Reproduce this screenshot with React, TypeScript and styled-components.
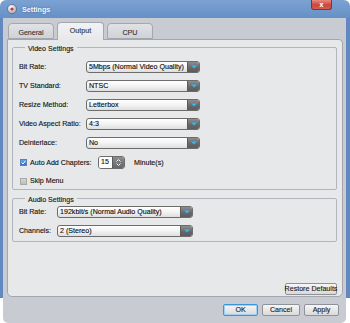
import styled, { createGlobalStyle } from 'styled-components';

const GlobalStyle = createGlobalStyle`
  html, body {
    margin: 0;
    padding: 0;
    background: #ffffff;
  }
  body {
    font-family: 'Liberation Sans', Arial, sans-serif;
    font-size: 7.1px;
    color: #111111;
    -webkit-text-stroke: 0.12px currentColor;
  }
  * {
    box-sizing: border-box;
  }
`;

const Window = styled.div`
  width: 350px;
  height: 323px;
  display: flex;
  flex-direction: column;
  background: linear-gradient(to bottom, #7ca2d3 0, #6690c6 18px, #6189bf 18px, #6189bf 298px, transparent 298px);
  border-radius: 6px 6px 0 0;
  overflow: hidden;
`;

const TitleBar = styled.div`
  height: 18px;
  display: flex;
  align-items: center;
  gap: 5px;
  padding: 0 18px 0 7px;
`;

const TitleText = styled.span`
  font-size: 7.2px;
  font-weight: bold;
  color: #f5f8fc;
  -webkit-text-stroke: 0;
  text-shadow: 0 0 2px rgba(40, 70, 120, 0.6);
`;

const CloseButton = styled.div`
  margin-left: auto;
  align-self: flex-start;
  width: 21px;
  height: 10px;
  border: 1px solid #8f2f2a;
  border-top: none;
  border-radius: 0 0 3px 3px;
  background: linear-gradient(to bottom, #e98a80, #c9463b 55%, #d65d50);
  color: #ffffff;
  font-size: 7px;
  font-weight: bold;
  line-height: 9px;
  text-align: center;
`;

const Body = styled.div`
  flex: 1;
  margin: 0 4px 0 3px;
  padding: 4px 3px 0 4px;
  background: #c8ccd2;
  border-radius: 0 0 5px 5px;
  display: flex;
  flex-direction: column;
`;

const TabRow = styled.div`
  height: 17px;
  display: flex;
  align-items: flex-end;
  gap: 3px;
  padding-left: 1px;
`;

const Tab = styled.div<{ $active?: boolean; $width: number }>`
  width: ${({ $width }) => $width}px;
  height: ${({ $active }) => ($active ? 18 : 16)}px;
  margin-bottom: ${({ $active }) => ($active ? -1 : 0)}px;
  position: relative;
  z-index: ${({ $active }) => ($active ? 1 : 0)};
  border: 1px solid #a4a8ae;
  border-bottom: ${({ $active }) => ($active ? 'none' : '1px solid #a4a8ae')};
  border-radius: 4px 4px 0 0;
  background: ${({ $active }) =>
    $active ? 'linear-gradient(to bottom, #f1f2f3, #e7e8ea)' : 'linear-gradient(to bottom, #e0e2e5, #cfd2d6)'};
  display: flex;
  justify-content: center;
  padding-top: ${({ $active }) => ($active ? 4 : 5)}px;
  color: #333333;
`;

const Panel = styled.div`
  flex: 1;
  background: #e7e8ea;
  border: 1px solid #a3a7ad;
  border-radius: 0 4px 5px 5px;
  padding: 1px 5px 1px 4px;
  display: flex;
  flex-direction: column;
`;

const Group = styled.fieldset<{ $top?: number; $padTop: number; $padBottom: number }>`
  margin: ${({ $top }) => $top || 0}px 0 0 0;
  padding: ${({ $padTop }) => $padTop}px 6px ${({ $padBottom }) => $padBottom}px 6px;
  border: 1px solid #b2b6bc;
  border-radius: 2px;
  min-width: 0;
  display: flex;
  flex-direction: column;
  gap: 7px;
`;

const Legend = styled.legend`
  padding: 4px 3px 0 3px;
  margin-left: 6px;
  line-height: 8px;
`;

const Row = styled.div<{ $labelWidth: number; $height?: number }>`
  height: ${({ $height }) => $height || 12}px;
  display: grid;
  grid-template-columns: ${({ $labelWidth }) => $labelWidth}px auto;
  align-items: center;
`;

const Label = styled.span`
  white-space: nowrap;
`;

const SelectBox = styled.div<{ $width: number }>`
  width: ${({ $width }) => $width}px;
  height: 12px;
  display: flex;
  border: 1px solid #6c6c6c;
  border-radius: 3px;
  overflow: hidden;
  background: linear-gradient(to bottom, #ffffff, #f3f3f3 50%, #dedede);
`;

const SelectValue = styled.span`
  flex: 1;
  padding-left: 2px;
  line-height: 10px;
  white-space: nowrap;
  overflow: hidden;
  color: #0a0a0a;
`;

const SelectArrow = styled.div`
  width: 12px;
  display: flex;
  align-items: center;
  justify-content: center;
  border-left: 1px solid #5a5a5a;
  background: linear-gradient(to bottom, #8d8d8d, #666666 60%, #5c5c5c);
`;

const CheckRow = styled.div<{ $height?: number }>`
  height: ${({ $height }) => $height || 10}px;
  display: flex;
  align-items: center;
  padding-left: 1px;
`;

const CheckBox = styled.div<{ $checked?: boolean }>`
  width: 7px;
  height: 7px;
  margin-right: 3px;
  border: 1px solid ${({ $checked }) => ($checked ? '#5b82b8' : '#a8a8a8')};
  background: ${({ $checked }) => ($checked ? 'linear-gradient(#6ea3e6, #2f6fc4)' : 'linear-gradient(#d6d6d6, #bdbdbd)')};
  display: flex;
  align-items: center;
  justify-content: center;
`;

const CheckLabel = styled.span<{ $width?: number }>`
  width: ${({ $width }) => ($width ? `${$width}px` : 'auto')};
  white-space: nowrap;
`;

const Spinner = styled.div`
  width: 27px;
  height: 13px;
  display: flex;
  border: 1px solid #6c6c6c;
  border-radius: 3px;
  overflow: hidden;
  margin-right: 9px;
`;

const SpinnerInput = styled.span`
  flex: 1;
  background: #ffffff;
  padding-left: 2px;
  line-height: 11px;
`;

const SpinnerButtons = styled.div`
  width: 12px;
  display: flex;
  flex-direction: column;
  align-items: center;
  justify-content: center;
  gap: 1px;
  border-left: 1px solid #5a5a5a;
  background: linear-gradient(to bottom, #8d8d8d, #666666);
`;

const Button = styled.div<{ $width: number; $primary?: boolean }>`
  width: ${({ $width }) => $width}px;
  height: 12px;
  border: 1px solid ${({ $primary }) => ($primary ? '#3d95d6' : '#8f9399')};
  border-radius: 2px;
  background: linear-gradient(to bottom, #f6f6f6, #e8e8e8 50%, #d9d9d9);
  box-shadow: ${({ $primary }) => ($primary ? 'inset 0 0 0 1px #9fd0f3' : 'none')};
  display: flex;
  align-items: center;
  justify-content: center;
  color: #1a1a1a;
  white-space: nowrap;
`;

const RestoreRow = styled.div`
  margin-top: auto;
  display: flex;
  justify-content: flex-end;
`;

const Footer = styled.div`
  height: 26px;
  display: flex;
  justify-content: flex-end;
  gap: 4px;
  padding: 7px 4px 0 0;
`;

const DownTriangle = () => (
  <svg width="6" height="4" viewBox="0 0 6 4">
    <path d="M0 0.5 H6 L3 3.5 Z" fill="#36b6f0" />
  </svg>
);

const Select = ({ width, value }: { width: number; value: string }) => (
  <SelectBox $width={width}>
    <SelectValue>{value}</SelectValue>
    <SelectArrow>
      <DownTriangle />
    </SelectArrow>
  </SelectBox>
);

const AppIcon = () => (
  <svg width="10" height="10" viewBox="0 0 10 10">
    <defs>
      <radialGradient id="disc" cx="40%" cy="35%" r="70%">
        <stop offset="0" stopColor="#ffffff" />
        <stop offset="1" stopColor="#9aa4b2" />
      </radialGradient>
    </defs>
    <circle cx="5" cy="5" r="4.6" fill="url(#disc)" stroke="#4f5b6c" strokeWidth="0.6" />
    <circle cx="5" cy="5" r="1.6" fill="#c8333a" />
  </svg>
);

const videoRows = [
  { label: 'Bit Rate:', value: '5Mbps (Normal Video Quality)' },
  { label: 'TV Standard:', value: 'NTSC' },
  { label: 'Resize Method:', value: 'Letterbox' },
  { label: 'Video Aspect Ratio:', value: '4:3' },
  { label: 'Deinterlace:', value: 'No' },
];

const audioRows = [
  { label: 'Bit Rate:', value: '192kbit/s (Normal Audio Quality)' },
  { label: 'Channels:', value: '2 (Stereo)' },
];

export default function App() {
  return (
    <>
      <GlobalStyle />
      <Window>
        <TitleBar>
          <AppIcon />
          <TitleText>Settings</TitleText>
          <CloseButton>x</CloseButton>
        </TitleBar>
        <Body>
          <TabRow>
            <Tab $width={46}>General</Tab>
            <Tab $width={47} $active>
              Output
            </Tab>
            <Tab $width={46}>CPU</Tab>
          </TabRow>
          <Panel>
            <Group $padTop={8} $padBottom={3}>
              <Legend>Video Settings</Legend>
              {videoRows.map((row) => (
                <Row key={row.label} $labelWidth={67}>
                  <Label>{row.label}</Label>
                  <Select width={114} value={row.value} />
                </Row>
              ))}
              <CheckRow $height={13}>
                <CheckBox $checked>
                  <svg width="5" height="5" viewBox="0 0 5 5">
                    <path d="M0.6 2.6 L2 4 L4.4 0.9" fill="none" stroke="#ffffff" strokeWidth="1" />
                  </svg>
                </CheckBox>
                <CheckLabel $width={68}>Auto Add Chapters:</CheckLabel>
                <Spinner>
                  <SpinnerInput>15</SpinnerInput>
                  <SpinnerButtons>
                    <svg width="5" height="3" viewBox="0 0 5 3">
                      <path d="M0.5 2.5 L2.5 0.5 L4.5 2.5" fill="none" stroke="#ffffff" strokeWidth="0.9" />
                    </svg>
                    <svg width="5" height="3" viewBox="0 0 5 3">
                      <path d="M0.5 0.5 L2.5 2.5 L4.5 0.5" fill="none" stroke="#ffffff" strokeWidth="0.9" />
                    </svg>
                  </SpinnerButtons>
                </Spinner>
                <CheckLabel>Minute(s)</CheckLabel>
              </CheckRow>
              <CheckRow>
                <CheckBox />
                <CheckLabel>Skip Menu</CheckLabel>
              </CheckRow>
            </Group>
            <Group $top={2} $padTop={2} $padBottom={4}>
              <Legend>Audio Settings</Legend>
              {audioRows.map((row) => (
                <Row key={row.label} $labelWidth={38}>
                  <Label>{row.label}</Label>
                  <Select width={136} value={row.value} />
                </Row>
              ))}
            </Group>
            <RestoreRow>
              <Button $width={52}>Restore Defaults</Button>
            </RestoreRow>
          </Panel>
          <Footer>
            <Button $width={35} $primary>
              OK
            </Button>
            <Button $width={38}>Cancel</Button>
            <Button $width={35}>Apply</Button>
          </Footer>
        </Body>
      </Window>
    </>
  );
}
